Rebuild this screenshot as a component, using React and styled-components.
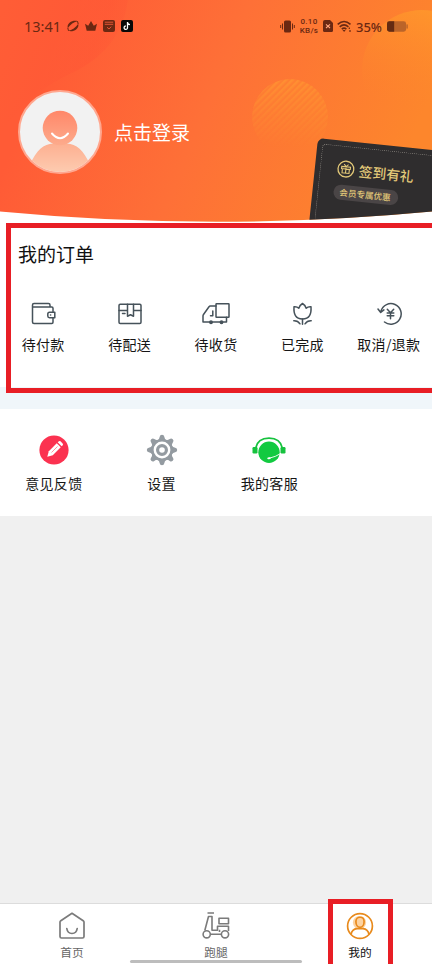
import React from 'react';
import styled, { createGlobalStyle } from 'styled-components';

const GlobalStyle = createGlobalStyle`
  * {
    box-sizing: border-box;
  }
  body {
    margin: 0;
    overflow: hidden;
    font-family: "Noto Sans CJK SC", "Noto Sans", sans-serif;
  }
`;

const Page = styled.div`
  position: relative;
  width: 432px;
  height: 964px;
  overflow: hidden;
  display: flex;
  flex-direction: column;
  background-color: #f0f0f0;
`;

const HeroWrap = styled.div`
  flex: none;
  height: 222px;
  background-color: #fff;
`;

const Hero = styled.header`
  position: relative;
  height: 222px;
  overflow: hidden;
  clip-path: path("M0 0H432V211.5Q216 232 0 211.5Z");
`;

const Backdrop = styled.svg`
  position: absolute;
  top: 0;
  left: 0;
`;

const StatusBar = styled.div`
  position: relative;
  display: flex;
  justify-content: space-between;
  height: 52px;
  padding: 0 24px 0 24px;
  color: #6b2812;
  font-family: "Noto Sans", sans-serif;
`;

const StatusGroup = styled.div`
  display: flex;
  align-items: center;
`;

const Clock = styled.span`
  width: 43px;
  font-size: 14.5px;
  line-height: 20px;
`;

const Speed = styled.span`
  display: flex;
  flex-direction: column;
  align-items: center;
  width: 20px;
  margin: 0 4px 0 4px;
  font-family: Roboto, sans-serif;
  font-size: 8px;
  font-weight: 500;
  line-height: 9px;
  letter-spacing: 0.3px;
`;

const Percent = styled.span`
  width: 27px;
  margin: 2px 4px 0 4px;
  font-size: 13px;
  font-weight: 500;
  line-height: 20px;
`;

const StatusIcon = styled.svg`
  display: block;
  flex: none;
  margin-right: ${(props) => props.$gap || 0}px;
`;

const Profile = styled.div`
  position: relative;
  display: flex;
  align-items: center;
  gap: 12px;
  margin-top: 38px;
  padding-left: 18px;
`;

const LoginText = styled.span`
  color: #fff;
  font-size: 19px;
  line-height: 28px;
`;

const Coupon = styled.div`
  position: absolute;
  top: 138px;
  left: 318px;
  display: flex;
  flex-direction: column;
  align-items: flex-start;
  gap: 7px;
  width: 150px;
  height: 110px;
  padding: 19px 0 0 22px;
  border-radius: 6px;
  background-color: #2f2d2e;
  color: #e2c878;
  transform: rotate(6deg);
  transform-origin: top left;

  &::before {
    content: '';
    position: absolute;
    top: 5px;
    left: 5px;
    right: 5px;
    bottom: 5px;
    border: 1px dotted #77736e;
    border-radius: 4px;
  }
`;

const CouponTitle = styled.div`
  display: flex;
  align-items: center;
  gap: 4px;
  height: 18px;
  font-size: 13.8px;
  font-weight: 500;
  line-height: 18px;
  white-space: nowrap;
`;

const CouponPill = styled.div`
  height: 15px;
  margin-left: -1px;
  padding: 0 7px 0 6px;
  border-radius: 8px;
  background-color: #4a4546;
  font-size: 8.6px;
  font-weight: 500;
  line-height: 14px;
  white-space: nowrap;
`;

const Orders = styled.section`
  flex: none;
  height: 165px;
  padding-top: 18px;
  background-color: #fff;
`;

const Heading = styled.h2`
  margin: 0 0 0 18px;
  color: #111;
  font-size: 19px;
  font-weight: 400;
  line-height: 28px;
`;

const Grid = styled.div`
  display: grid;
  grid-template-columns: repeat(${(props) => props.$columns}, 1fr);
  margin-top: ${(props) => props.$top || 0}px;
`;

const Item = styled.div`
  display: flex;
  flex-direction: column;
  align-items: center;
`;

const IconBox = styled.div`
  display: flex;
  align-items: center;
  justify-content: center;
  height: ${(props) => props.$height}px;
`;

const Label = styled.span`
  color: #161616;
  font-size: 14px;
  line-height: 20px;
  letter-spacing: 0.3px;
  white-space: nowrap;
  margin-top: ${(props) => props.$top}px;
`;

const Divider = styled.div`
  flex: none;
  height: 22px;
  background-color: #f0f6fa;
`;

const Tools = styled.section`
  flex: none;
  height: 107px;
  padding: 24px 1px 0 0;
  background-color: #fff;
`;

const TabBar = styled.nav`
  display: grid;
  grid-template-columns: repeat(3, 1fr);
  height: 61px;
  margin-top: auto;
  padding-top: 7px;
  border-top: 1px solid #dcdcdc;
  background-color: #fff;
`;

const TabLabel = styled.span`
  margin-top: 2px;
  color: ${(props) => (props.$active ? '#111' : '#666')};
  font-size: 11.7px;
  line-height: 18px;
`;

const HomeIndicator = styled.div`
  position: absolute;
  bottom: 1px;
  left: 130px;
  width: 172px;
  height: 3px;
  border-radius: 2px;
  background-color: #bdbdbd;
`;

const Marker = styled.div`
  position: absolute;
  border: 5px solid #e81e25;
`;

const OrdersMarker = styled(Marker)`
  top: 223px;
  left: 6px;
  right: -8px;
  height: 170px;
`;

const TabMarker = styled(Marker)`
  top: 899px;
  left: 328px;
  width: 65px;
  height: 75px;
`;

const line = {
  fill: 'none',
  stroke: '#46525a',
  strokeWidth: 1.5,
  strokeLinecap: 'round',
  strokeLinejoin: 'round',
};

function HeroBackdrop() {
  return (
    <Backdrop width="432" height="222" viewBox="0 0 432 222">
      <defs>
        <linearGradient id="base" gradientUnits="userSpaceOnUse" x1="60" y1="30" x2="400" y2="170">
          <stop offset="0" stopColor="#ff5b36" />
          <stop offset="0.45" stopColor="#fe7037" />
          <stop offset="1" stopColor="#fd862c" />
        </linearGradient>
        <linearGradient id="wave" x1="0" y1="0" x2="1" y2="0.4">
          <stop offset="0" stopColor="#ff6036" />
          <stop offset="0.75" stopColor="#ff5535" />
          <stop offset="1" stopColor="#ff5535" stopOpacity="0.2" />
        </linearGradient>
        <linearGradient id="sun" x1="0.6" y1="0" x2="0.3" y2="1">
          <stop offset="0" stopColor="#ff9a2b" />
          <stop offset="0.8" stopColor="#fd862c" stopOpacity="0" />
        </linearGradient>
        <linearGradient id="fade" x1="0" y1="0" x2="0" y2="1">
          <stop offset="0" stopColor="#fff" />
          <stop offset="0.9" stopColor="#fff" stopOpacity="0" />
        </linearGradient>
        <pattern id="stripes" width="4.6" height="4.6" patternUnits="userSpaceOnUse" patternTransform="rotate(45)">
          <rect width="2.3" height="4.6" fill="#ff9e33" />
        </pattern>
        <mask id="ballMask">
          <circle cx="290" cy="117" r="38" fill="url(#fade)" />
        </mask>
      </defs>
      <rect width="432" height="222" fill="url(#base)" />
      <path d="M0 0H128Q122 46 78 70Q20 96 0 137Z" fill="url(#wave)" opacity="0.45" />
      <circle cx="422" cy="70" r="60" fill="url(#sun)" opacity="0.8" />
      <g mask="url(#ballMask)">
        <rect x="250" y="78" width="80" height="80" fill="#ff8b30" opacity="0.5" />
        <rect x="250" y="78" width="80" height="80" fill="url(#stripes)" opacity="0.5" />
      </g>
    </Backdrop>
  );
}

function Avatar() {
  return (
    <svg width="84" height="84" viewBox="0 0 84 84">
      <defs>
        <linearGradient id="head" x1="0" y1="0" x2="0" y2="1">
          <stop offset="0" stopColor="#ff8769" />
          <stop offset="1" stopColor="#fdab8c" />
        </linearGradient>
        <linearGradient id="body" x1="0" y1="0" x2="0" y2="1">
          <stop offset="0" stopColor="#fdab8c" />
          <stop offset="1" stopColor="#fdcdb2" />
        </linearGradient>
        <clipPath id="avatarClip">
          <circle cx="42" cy="42" r="40" />
        </clipPath>
      </defs>
      <circle cx="42" cy="42" r="41" fill="#f2f2f2" stroke="#ffa78f" strokeWidth="2" />
      <g clipPath="url(#avatarClip)">
        <path d="M12 75C18 60 26 54 35 53.5Q36 50 34 49H50Q48 50 49 53.5C58 54 66 60 72 75V84H12Z" fill="url(#body)" />
      </g>
      <circle cx="42" cy="38" r="17.3" fill="url(#head)" />
      <path d="M34 43.5Q42 53 50 43.5" fill="none" stroke="#fff" strokeWidth="2" strokeLinecap="round" />
    </svg>
  );
}

function GiftIcon() {
  return (
    <svg width="18" height="18" viewBox="0 0 18 18" fill="none" stroke="#e2c878" strokeWidth="1.3">
      <circle cx="9" cy="9" r="7.9" />
      <path d="M4.6 6.7H13.4V8.9H4.6ZM5.5 8.9V13H12.5V8.9M9 6.7V13M6.8 4.3L9 6.5L11.2 4.3" strokeWidth="1.1" />
    </svg>
  );
}

function WalletIcon() {
  return (
    <svg width="26" height="24" viewBox="0 0 26 24" {...line}>
      <path d="M23 9.5V6.2Q23 5 21.8 5H2.5V3Q2.5 1.5 4 1.5H18.5Q20 1.5 20 3V5M2.5 5V20Q2.5 21.5 4 21.5H21.8Q23 21.5 23 20.3V16" />
      <path d="M19.5 10.2H24.8V15.7H19.5Q17.8 15.7 17.8 14V12Q17.8 10.2 19.5 10.2Z" />
      <path d="M20.5 13H20.7" />
    </svg>
  );
}

function PackageIcon() {
  return (
    <svg width="26" height="24" viewBox="0 0 26 24" {...line}>
      <rect x="2" y="2.2" width="22" height="19.3" rx="1.2" />
      <path d="M2 8.5H10.5M16.5 8.5H24M10.5 2.2V14.2L13.5 12.8L16.5 14.2V2.2M5.5 11.5H8" />
    </svg>
  );
}

function TruckIcon() {
  return (
    <svg width="30" height="24" viewBox="0 0 30 24" {...line}>
      <rect x="15" y="1.8" width="13" height="13.5" rx="0.5" />
      <path d="M15 4H9.3Q8.5 4 8 4.8L2.5 12.5Q2 13.2 2 14V20H25.5V15.3M11.8 9V13.7H9.5" />
      <circle cx="10" cy="20.3" r="1.2" fill="#46525a" />
      <circle cx="20.5" cy="20.3" r="1.2" fill="#46525a" />
    </svg>
  );
}

function TulipIcon() {
  return (
    <svg width="22" height="24" viewBox="-0.5 0 22 24" {...line}>
      <path d="M2.5 4.8Q5.5 4.5 7.3 6.2Q8.4 3 11 1.5Q13.6 3 14.7 6.2Q16.5 4.5 19.5 4.8C20 12 18 17 11 17C4 17 2 12 2.5 4.8Z" />
      <path d="M11 17V22.3M2.3 18.8Q6.3 18.6 8.5 21.8M19.7 18.8Q15.7 18.6 13.5 21.8" />
    </svg>
  );
}

function RefundIcon() {
  return (
    <svg width="26" height="24" viewBox="-0.5 0.5 26 24" {...line}>
      <path d="M4.5 9.5A10.3 10.3 0 1 1 8 20.5M1.5 7.5L4.2 11L7.4 8.4" />
      <path d="M10.8 7.7L14 11.2L17.2 7.7M14 11.2V17.3M10.7 11.5H17.3M10.7 14.3H17.3" />
    </svg>
  );
}

function FeedbackIcon() {
  return (
    <svg width="30" height="30" viewBox="0 0 30 30">
      <circle cx="15" cy="15" r="14.6" fill="#fb3250" />
      <g transform="rotate(45 15 15)" fill="#fff">
        <path d="M12.2 8.3H17.8V19.5L15 24.5L12.2 19.5Z" />
        <path d="M12.2 7V5.7Q12.2 4.3 13.5 4.3H16.5Q17.8 4.3 17.8 5.7V7Z" />
        <path d="M15 10V18.5" stroke="#fb3250" strokeWidth="0.5" />
      </g>
    </svg>
  );
}

const teeth = [0, 45, 90, 135, 180, 225, 270, 315];

function SettingsIcon() {
  return (
    <svg width="32" height="32" viewBox="0 0 32 32">
      <g fill="#949ba1">
        {teeth.map((angle) => (
          <path
            key={angle}
            d="M11.5 6.5Q13.5 5 13.7 2.8Q13.9 0.8 16 0.8Q18.1 0.8 18.3 2.8Q18.5 5 20.5 6.5Z"
            transform={`rotate(${angle} 16 16)`}
          />
        ))}
        <circle cx="16" cy="16" r="11" />
      </g>
      <circle cx="16" cy="16" r="7.2" fill="none" stroke="#fff" strokeWidth="2.4" />
      <circle cx="16" cy="16" r="2.8" fill="#fff" />
    </svg>
  );
}

function ServiceIcon() {
  return (
    <svg width="34" height="28" viewBox="0 0 34 28">
      <path d="M3.7 12C5 5.5 10 2.1 17 2.1S29 5.5 30.3 12" fill="none" stroke="#16c23e" strokeWidth="1.7" />
      <rect x="0.5" y="11" width="5" height="6.5" rx="1.2" fill="#16c23e" />
      <rect x="28.5" y="11" width="5" height="6.5" rx="1.2" fill="#16c23e" />
      <circle cx="17" cy="16.3" r="10.7" fill="#12ca40" />
      <path d="M29 17.3Q24 20.7 17 22.3" fill="none" stroke="#fff" strokeWidth="0.9" />
      <ellipse cx="17" cy="22.2" rx="1.8" ry="1" fill="#fff" transform="rotate(-10 17 22.2)" />
    </svg>
  );
}

function HomeIcon() {
  return (
    <svg width="28" height="28" viewBox="0 0 28 28" fill="none" stroke="#7b7b7b" strokeWidth="1.7" strokeLinecap="round" strokeLinejoin="round">
      <path d="M14 1.3L25.2 8.7Q26 9.3 26 10V24.5Q26 26 24.5 26H3.5Q2 26 2 24.5V10Q2 9.3 2.8 8.7Z" />
      <path d="M8.8 16.5Q9.5 21.5 14 21.5T19.2 16.5" />
    </svg>
  );
}

function ScooterIcon() {
  return (
    <svg width="28" height="28" viewBox="0 0 28 28" fill="none" stroke="#7b7b7b" strokeWidth="1.6" strokeLinejoin="round">
      <path d="M5.5 1H12M2.8 18.5L6.5 4.5H10V18.3H15.5V14.2H26.5V19" />
      <rect x="17" y="6.3" width="9.5" height="5.5" />
      <circle cx="4.7" cy="22.3" r="3.6" />
      <circle cx="23" cy="22.3" r="3.6" />
      <path d="M8.3 22.3H19.4M17.5 20V17.7" />
    </svg>
  );
}

function MineIcon() {
  return (
    <svg width="28" height="28" viewBox="0 0 28 28" fill="none" stroke="#e88a1c" strokeWidth="1.7">
      <circle cx="13.5" cy="10.5" r="6.6" fill="#fcd3a2" stroke="none" />
      <circle cx="14" cy="14" r="12.4" />
      <path d="M9.9 9.5C9.9 3.8 18.1 3.8 18.1 9.5C18.1 12.7 16.5 15.3 14 15.3S9.9 12.7 9.9 9.5Z" />
      <path d="M5 22.5Q6 17 11 16.6H17Q22 17 23 22.5" />
    </svg>
  );
}

const orders = [
  { label: '待付款', icon: <WalletIcon /> },
  { label: '待配送', icon: <PackageIcon /> },
  { label: '待收货', icon: <TruckIcon /> },
  { label: '已完成', icon: <TulipIcon /> },
  { label: '取消/退款', icon: <RefundIcon /> },
];

const tools = [
  { label: '意见反馈', icon: <FeedbackIcon /> },
  { label: '设置', icon: <SettingsIcon /> },
  { label: '我的客服', icon: <ServiceIcon /> },
];

const tabs = [
  { label: '首页', icon: <HomeIcon /> },
  { label: '跑腿', icon: <ScooterIcon /> },
  { label: '我的', icon: <MineIcon />, active: true },
];

function Status() {
  return (
    <StatusBar>
      <StatusGroup>
        <Clock>13:41</Clock>
        <StatusIcon $gap={6} width="12" height="12" viewBox="0 0 12 12" fill="#6b2812">
          <path d="M0.8 8.2C-0.5 3.5 5 -0.5 11 1.2C7 1.8 3 4.5 0.8 8.2Z" />
          <path d="M11.2 3.8C12.5 8.5 7 12.5 1 10.8C5 10.2 9 7.5 11.2 3.8Z" />
          <path d="M0.8 8L1.5 10.8M11.2 4L10.5 1.2" stroke="#6b2812" />
        </StatusIcon>
        <StatusIcon $gap={6} width="12" height="12" viewBox="0 0 12 12" fill="#6b2812">
          <path d="M0 3.8L3.2 5.8L6 1L8.8 5.8L12 3.8L10.3 10.7H1.7Z" />
        </StatusIcon>
        <StatusIcon $gap={6} width="12" height="12" viewBox="0 0 12 12">
          <rect width="12" height="12" rx="2" fill="#6b2812" />
          <path d="M1.8 2.2H10.2M1.8 4.3H10.2M4 7.2L6 9L8.2 6.7" fill="none" stroke="#f0593a" strokeWidth="0.9" />
        </StatusIcon>
        <StatusIcon width="12" height="12" viewBox="0 0 12 12">
          <rect width="12" height="12" rx="2" fill="#080808" />
          <path d="M6.5 2V7.6A1.7 1.7 0 1 1 4.8 6M6.5 2.5Q7 4.5 9 4.6" fill="none" stroke="#fff" strokeWidth="1.3" />
        </StatusIcon>
      </StatusGroup>
      <StatusGroup>
        <StatusIcon width="15" height="13" viewBox="0 0 15 13" fill="#6b2812">
          <rect x="4" y="0.5" width="7" height="12" rx="1.6" />
          <path d="M2.5 3.5V9.5M0.7 5V8M12.5 3.5V9.5M14.3 5V8" stroke="#6b2812" />
        </StatusIcon>
        <Speed>
          <span>0.10</span>
          <span>KB/s</span>
        </Speed>
        <StatusIcon $gap={4} width="10" height="12" viewBox="0 0 10 12">
          <path d="M2 0H7L10 3V10.5Q10 12 8.5 12H1.5Q0 12 0 10.5V2Q0 0 2 0Z" fill="#6b2812" />
          <path d="M3 4.3L7 8M7 4.3L3 8" stroke="#ffa47c" strokeWidth="1.1" />
        </StatusIcon>
        <StatusIcon width="15" height="13" viewBox="0 0 15 13" fill="none" stroke="#6b2812" strokeWidth="1.6">
          <path d="M0.7 4.3Q7 -1.3 13.5 4.3M2.7 6.8Q7 3 11.4 6.8M4.8 9.1Q7 7.2 9.4 9.1" />
          <path d="M5.5 10L7.1 12L8.7 10Z" fill="#6b2812" stroke="none" />
          <path d="M12.3 7.5V9M13 10V12" strokeWidth="1.2" />
        </StatusIcon>
        <Percent>35%</Percent>
        <StatusIcon width="21" height="11" viewBox="0 0 22 11">
          <rect width="20" height="11" rx="2.5" fill="#bb6429" />
          <rect x="20.3" y="3.2" width="1.5" height="4.6" rx="0.7" fill="#bb6429" />
          <path d="M2.5 0H7.5V11H2.5Q0 11 0 8.5V2.5Q0 0 2.5 0Z" fill="#642b12" />
        </StatusIcon>
      </StatusGroup>
    </StatusBar>
  );
}

function App() {
  return (
    <Page>
      <GlobalStyle />
      <HeroWrap>
        <Hero>
          <HeroBackdrop />
          <Status />
          <Profile>
            <Avatar />
            <LoginText>点击登录</LoginText>
          </Profile>
          <Coupon>
            <CouponTitle>
              <GiftIcon />
              <span>签到有礼</span>
            </CouponTitle>
            <CouponPill>会员专属优惠</CouponPill>
          </Coupon>
        </Hero>
      </HeroWrap>
      <Orders>
        <Heading>我的订单</Heading>
        <Grid $columns={5} $top={34}>
          {orders.map((item) => (
            <Item key={item.label}>
              <IconBox $height={24}>{item.icon}</IconBox>
              <Label $top={8}>{item.label}</Label>
            </Item>
          ))}
        </Grid>
      </Orders>
      <Divider />
      <Tools>
        <Grid $columns={4}>
          {tools.map((item) => (
            <Item key={item.label}>
              <IconBox $height={34}>{item.icon}</IconBox>
              <Label $top={6}>{item.label}</Label>
            </Item>
          ))}
        </Grid>
      </Tools>
      <TabBar>
        {tabs.map((tab) => (
          <Item key={tab.label}>
            <IconBox $height={30}>{tab.icon}</IconBox>
            <TabLabel $active={tab.active}>{tab.label}</TabLabel>
          </Item>
        ))}
      </TabBar>
      <HomeIndicator />
      <OrdersMarker />
      <TabMarker />
    </Page>
  );
}

export default App;
